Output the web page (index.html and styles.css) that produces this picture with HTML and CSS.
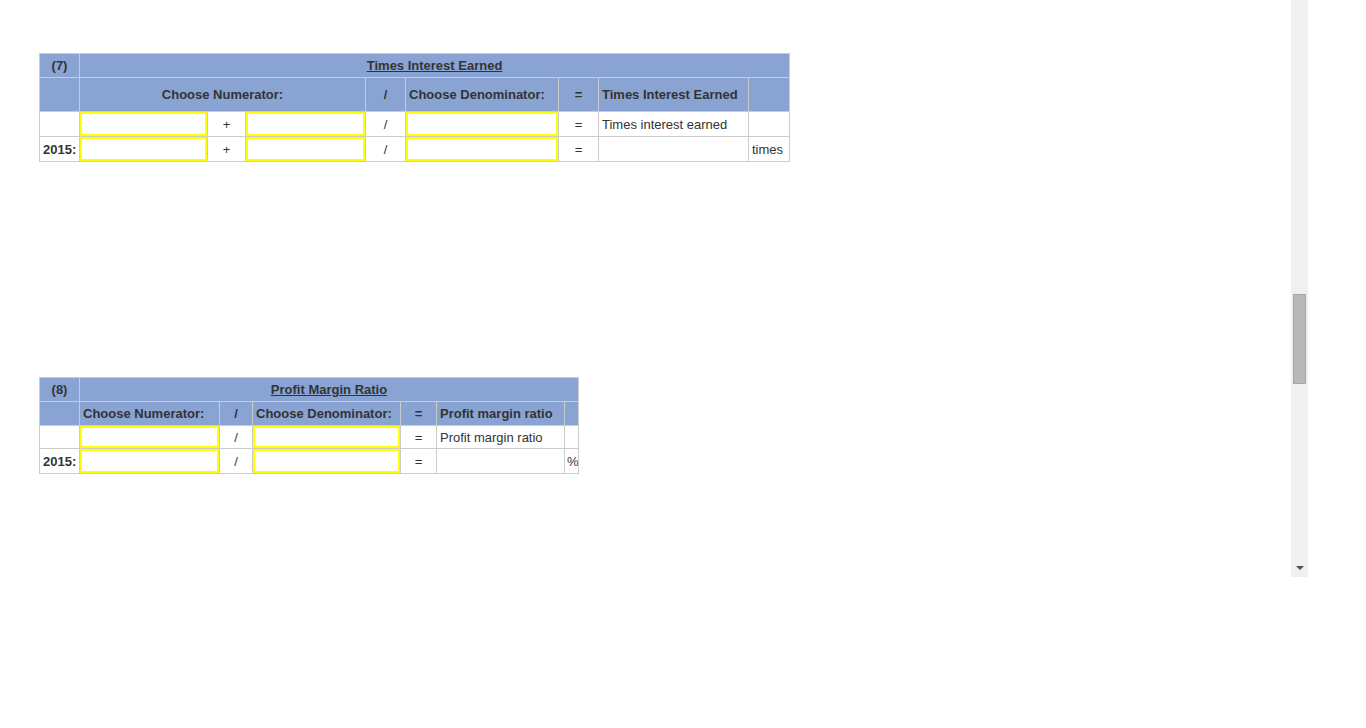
FILE: index.html
```html
<!DOCTYPE html>
<html>
<head>
<meta charset="utf-8">
<title>Ratios</title>
<link rel="stylesheet" href="styles.css">
</head>
<body>
<div class="page">
  <div class="frame">
    <table class="ratio ratio-7">
      <colgroup>
        <col class="c40"><col class="c128"><col class="c38"><col class="c120"><col class="c40"><col class="c153"><col class="c40"><col class="c150"><col class="c41">
      </colgroup>
      <tr class="title-row">
        <td class="hd center bold">(7)</td>
        <td class="hd center bold" colspan="8"><u>Times Interest Earned</u></td>
      </tr>
      <tr class="head-row tall">
        <td class="hd"></td>
        <td class="hd center bold" colspan="3">Choose Numerator:</td>
        <td class="hd center bold">/</td>
        <td class="hd bold">Choose Denominator:</td>
        <td class="hd center bold">=</td>
        <td class="hd bold">Times Interest Earned</td>
        <td class="hd"></td>
      </tr>
      <tr class="data-row">
        <td></td>
        <td class="in"><input type="text"></td>
        <td class="center">+</td>
        <td class="in"><input type="text"></td>
        <td class="center">/</td>
        <td class="in"><input type="text"></td>
        <td class="center">=</td>
        <td>Times interest earned</td>
        <td></td>
      </tr>
      <tr class="data-row">
        <td class="bold">2015:</td>
        <td class="in"><input type="text"></td>
        <td class="center">+</td>
        <td class="in"><input type="text"></td>
        <td class="center">/</td>
        <td class="in"><input type="text"></td>
        <td class="center">=</td>
        <td></td>
        <td>times</td>
      </tr>
    </table>

    <table class="ratio ratio-8">
      <colgroup>
        <col class="c40"><col class="c140"><col class="c33"><col class="c148"><col class="c36"><col class="c128"><col class="c14">
      </colgroup>
      <tr class="title-row">
        <td class="hd center bold">(8)</td>
        <td class="hd center bold" colspan="6"><u>Profit Margin Ratio</u></td>
      </tr>
      <tr class="head-row">
        <td class="hd"></td>
        <td class="hd bold">Choose Numerator:</td>
        <td class="hd center bold">/</td>
        <td class="hd bold">Choose Denominator:</td>
        <td class="hd center bold">=</td>
        <td class="hd bold">Profit margin ratio</td>
        <td class="hd"></td>
      </tr>
      <tr class="data-row short">
        <td></td>
        <td class="in"><input type="text"></td>
        <td class="center">/</td>
        <td class="in"><input type="text"></td>
        <td class="center">=</td>
        <td>Profit margin ratio</td>
        <td></td>
      </tr>
      <tr class="data-row">
        <td class="bold">2015:</td>
        <td class="in"><input type="text"></td>
        <td class="center">/</td>
        <td class="in"><input type="text"></td>
        <td class="center">=</td>
        <td></td>
        <td class="clip">%</td>
      </tr>
    </table>
  </div>
  <div class="scrollbar">
    <div class="thumb"></div>
    <div class="spacer"></div>
    <div class="arrow"></div>
  </div>
</div>
</body>
</html>
```

FILE: styles.css
```css
html, body {
  margin: 0;
  padding: 0;
  background: #ffffff;
}

body {
  font-family: "Liberation Sans", Arial, sans-serif;
  font-size: 13px;
  color: #333333;
}

.page {
  display: flex;
  align-items: flex-start;
}

.frame {
  width: 1252px;
  height: 524px;
  padding: 53px 0 0 39px;
  display: flex;
  flex-direction: column;
  align-items: flex-start;
}

.ratio {
  border-collapse: collapse;
  table-layout: fixed;
  border: 1px solid #cccccc;
}

.ratio-7 {
  width: 751px;
}

.ratio-8 {
  width: 540px;
  margin-top: 215px;
}

.c14 { width: 14px; }
.c33 { width: 33px; }
.c36 { width: 36px; }
.c38 { width: 38px; }
.c40 { width: 40px; }
.c41 { width: 41px; }
.c120 { width: 120px; }
.c128 { width: 128px; }
.c140 { width: 140px; }
.c148 { width: 148px; }
.c150 { width: 150px; }
.c153 { width: 153px; }

.ratio td {
  border: 1px solid #cccccc;
  padding: 0 3px;
  vertical-align: middle;
  white-space: nowrap;
  overflow: hidden;
  line-height: 15px;
}

.ratio td.hd {
  background: #89a4d3;
}

.title-row td {
  height: 23px;
}

.head-row td {
  height: 23px;
}

.head-row.tall td {
  height: 33px;
}

.data-row td {
  height: 24px;
}

.data-row.short td {
  height: 22px;
}

.center {
  text-align: center;
}

.bold {
  font-weight: bold;
}

.ratio td.in {
  padding: 0;
}

.ratio td.in input {
  display: block;
  box-sizing: border-box;
  width: 100%;
  height: 100%;
  min-height: 22px;
  margin: 0;
  border: 2px solid #ffff00;
  background: #ffffff;
  outline: none;
  font-family: "Liberation Sans", Arial, sans-serif;
  font-size: 13px;
}

.ratio td.clip {
  padding: 0 0 0 2px;
  text-overflow: clip;
}

.scrollbar {
  width: 17px;
  height: 577px;
  background: #f0f0f0;
  display: flex;
  flex-direction: column;
  align-items: center;
  box-sizing: border-box;
  padding-top: 294px;
  padding-bottom: 7px;
}

.thumb {
  width: 13px;
  height: 90px;
  box-sizing: border-box;
  background: #b9b9b9;
  border: 1px solid #a6a6a6;
}

.spacer {
  flex: 1;
}

.arrow {
  width: 0;
  height: 0;
  border-left: 4px solid transparent;
  border-right: 4px solid transparent;
  border-top: 4px solid #505050;
}
```
